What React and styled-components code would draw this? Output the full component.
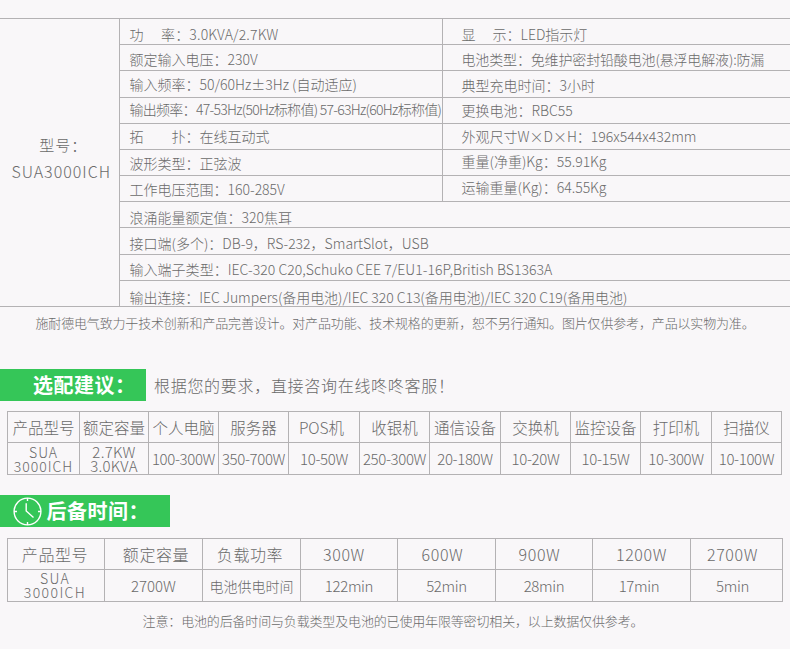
import styled, { createGlobalStyle } from "styled-components";

const GlobalStyle = createGlobalStyle`
  html, body {
    margin: 0;
    padding: 0;
    background: #f9f7f9;
  }
  body {
    font-family: "Noto Sans CJK SC", "Noto Sans", sans-serif;
    font-weight: 300;
    color: #6a6a6a;
  }
`;

const Page = styled.div`
  width: 790px;
  height: 649px;
  overflow: hidden;
  padding-top: 18px;
  box-sizing: border-box;
`;

const LINE = "#b4b2b4";

const SpecTable = styled.table`
  width: 790px;
  table-layout: fixed;
  border-collapse: collapse;
  font-size: 14px;
`;

const SpecRow = styled.tr`
  height: ${(p) => p.$h || 26}px;
`;

const ModelCell = styled.td`
  border-top: 1px solid ${LINE};
  border-bottom: 1px solid ${LINE};
  border-right: 1px solid ${LINE};
  text-align: center;
  padding: 0 0 10px 4px;
  font-size: 16px;
  letter-spacing: 1px;
  line-height: 26px;
`;

const ModelLabel = styled.span`
  display: block;
  font-size: 15px;
  padding-left: 4px;
`;

const SpecCell = styled.td`
  border: 1px solid ${LINE};
  border-right: none;
  vertical-align: top;
  padding: ${(p) => p.$pt}px 0 0 ${(p) => p.$pl || 10}px;
  line-height: 16px;
  white-space: nowrap;
  overflow: hidden;
  letter-spacing: ${(p) => p.$ls || 0}px;
`;

const Note = styled.p`
  margin: 0;
  text-align: center;
  font-size: 13px;
  letter-spacing: -0.16px;
  line-height: 18px;
  white-space: nowrap;
  padding: ${(p) => p.$top}px ${(p) => p.$pr || 0}px 0 0;
`;

const HintRow = styled.div`
  display: flex;
  align-items: center;
  gap: 8px;
  margin-top: 37px;
  font-size: 16px;
  letter-spacing: 0.7px;
`;

const Banner = styled.div`
  width: ${(p) => p.$w}px;
  height: 32px;
  box-sizing: border-box;
  padding-left: ${(p) => p.$pad}px;
  display: flex;
  align-items: center;
  gap: 5px;
  background: #35c658;
  color: #fff;
  font-size: 20px;
  font-weight: 700;
  letter-spacing: 0.5px;
  line-height: 32px;
  white-space: nowrap;
`;

const SecondBanner = styled(Banner)`
  margin-top: 20px;
`;

const GridTable = styled.table`
  width: 775px;
  margin: ${(p) => p.$mt}px 0 0 7px;
  table-layout: fixed;
  border-collapse: collapse;
`;

const Col = styled.col`
  width: ${(p) => p.$w}px;
`;

const GridRow = styled.tr`
  height: ${(p) => p.$h}px;
`;

const Cell = styled.td`
  border: 1px solid ${LINE};
  padding: 0 ${(p) => p.$pr || 0}px ${(p) => p.$pb || 0}px ${(p) => p.$pl || 0}px;
  text-align: center;
  white-space: nowrap;
  font-size: ${(p) => p.$size || 15}px;
  letter-spacing: ${(p) => p.$ls ?? -0.35}px;
  line-height: ${(p) => p.$lh || 20}px;
`;

// [row height, left text, left top pad, right text, right top pad, left spacing, right spacing]
const specRows = [
  [26, "功　 率：3.0KVA/2.7KW", 7, "显　 示：LED指示灯", 7, 0.15],
  [26, "额定输入电压：230V", 6, "电池类型：免维护密封铅酸电池(悬浮电解液):防漏", 6, 0, -0.15],
  [27, "输入频率：50/60Hz±3Hz (自动适应)", 5, "典型充电时间：3小时", 6],
  [26, "输出频率：47-53Hz(50Hz标称值) 57-63Hz(60Hz标称值)", 3, "更换电池：RBC55", 4, -0.72],
  [26, "拓　　扑：在线互动式", 4, "外观尺寸W×D×H：196x544x432mm", 4],
  [26, "波形类型：正弦波", 5, "重量(净重)Kg：55.91Kg", 3],
  [26, "工作电压范围：160-285V", 5, "运输重量(Kg)：64.55Kg", 3],
];

const wideRows = [
  [26, "浪涌能量额定值：320焦耳", 7],
  [27, "接口端(多个)：DB-9，RS-232，SmartSlot，USB", 7],
  [26, "输入端子类型：IEC-320 C20,Schuko CEE 7/EU1-16P,British BS1363A", 6, 0.03],
  [26, "输出连接：IEC Jumpers(备用电池)/IEC 320 C13(备用电池)/IEC 320 C19(备用电池)", 8, -0.05],
];

const loadWidths = [72, 69, 70, 70, 71, 70, 71, 70, 70, 71, 70];
const loadHead = [
  ["产品型号", 0],
  ["额定容量", 0],
  ["个人电脑", 0],
  ["服务器", 0],
  ["POS机", 5],
  ["收银机", 0],
  ["通信设备", 0],
  ["交换机", 0],
  ["监控设备", 0],
  ["打印机", 0],
  ["扫描仪", 0],
];
const loadRow = ["100-300W", "350-700W", "10-50W", "250-300W", "20-180W", "10-20W", "10-15W", "10-300W", "10-100W"];

const timeWidths = [97, 98, 98, 97, 98, 97, 98, 92];
const timeHead = [
  ["产品型号", 2, 0],
  ["额定容量", 0, 5],
  ["负载功率", 3, 0],
  ["300W", 10, 0],
  ["600W", 8, 0],
  ["900W", 9, 0],
  ["1200W", 0, 0],
  ["2700W", 8, 0],
];
const timeRow = [
  ["122min", 0],
  ["52min", 0],
  ["28min", 0],
  ["17min", 5],
  ["5min", 8],
];

function ClockIcon() {
  return (
    <svg width="29" height="29" viewBox="0 0 29 29" fill="none" stroke="#fff" strokeWidth="1.4">
      <circle cx="14.5" cy="14.5" r="13.4" />
      <path d="M14.5 1v3M14.5 25v3M1 14.5h3M25 14.5h3" />
      <path d="M13.2 6.2V14l7.3 6.5" />
    </svg>
  );
}

export default function App() {
  return (
    <Page>
      <GlobalStyle />
      <SpecTable>
        <colgroup>
          <Col $w={119} />
          <Col $w={323} />
          <Col $w={348} />
        </colgroup>
        <tbody>
          {specRows.map(([h, left, leftPt, right, rightPt, ls, rightLs], i) => (
            <SpecRow key={left} $h={h}>
              {i === 0 && (
                <ModelCell rowSpan={11}>
                  <ModelLabel>型号：</ModelLabel>
                  SUA3000ICH
                </ModelCell>
              )}
              <SpecCell $pt={leftPt} $ls={ls}>{left}</SpecCell>
              <SpecCell $pt={rightPt} $pl={19} $ls={rightLs}>{right}</SpecCell>
            </SpecRow>
          ))}
          {wideRows.map(([h, text, pt, ls]) => (
            <SpecRow key={text} $h={h}>
              <SpecCell colSpan={2} $pt={pt} $ls={ls}>{text}</SpecCell>
            </SpecRow>
          ))}
        </tbody>
      </SpecTable>

      <Note $top={7}>
        施耐德电气致力于技术创新和产品完善设计。对产品功能、技术规格的更新，恕不另行通知。图片仅供参考，产品以实物为准。
      </Note>

      <HintRow>
        <Banner $w={146} $pad={33}>选配建议：</Banner>
        根据您的要求，直接咨询在线咚咚客服！
      </HintRow>

      <GridTable $mt={10}>
        <colgroup>
          {loadWidths.map((w, i) => (
            <Col key={i} $w={w} />
          ))}
        </colgroup>
        <tbody>
          <GridRow $h={31}>
            {loadHead.map(([t, pr]) => (
              <Cell key={t} $size={15.5} $ls={0} $pr={pr}>{t}</Cell>
            ))}
          </GridRow>
          <GridRow $h={32}>
            <Cell $lh={14} $ls={1} $size={14}>SUA<br />3000ICH</Cell>
            <Cell $lh={14} $ls={0.3}>2.7KW<br />3.0KVA</Cell>
            {loadRow.map((t, i) => (
              <Cell key={i}>{t}</Cell>
            ))}
          </GridRow>
        </tbody>
      </GridTable>

      <SecondBanner $w={170} $pad={12.5}>
        <ClockIcon />
        后备时间：
      </SecondBanner>

      <GridTable $mt={11}>
        <colgroup>
          {timeWidths.map((w, i) => (
            <Col key={i} $w={w} />
          ))}
        </colgroup>
        <tbody>
          <GridRow $h={31}>
            {timeHead.map(([t, pr, pl]) => (
              <Cell key={t} $size={16} $ls={0.6} $pr={pr} $pl={pl}>{t}</Cell>
            ))}
          </GridRow>
          <GridRow $h={32}>
            <Cell $lh={14} $ls={1.4} $size={14} $pb={2} $pr={2}>SUA<br />3000ICH</Cell>
            <Cell $ls={0}>2700W</Cell>
            <Cell $size={14} $ls={0}>电池供电时间</Cell>
            {timeRow.map(([t, pr]) => (
              <Cell key={t} $pr={pr}>{t}</Cell>
            ))}
          </GridRow>
        </tbody>
      </GridTable>

      <Note $top={10} $pr={4}>
        注意：电池的后备时间与负载类型及电池的已使用年限等密切相关，以上数据仅供参考。
      </Note>
    </Page>
  );
}
